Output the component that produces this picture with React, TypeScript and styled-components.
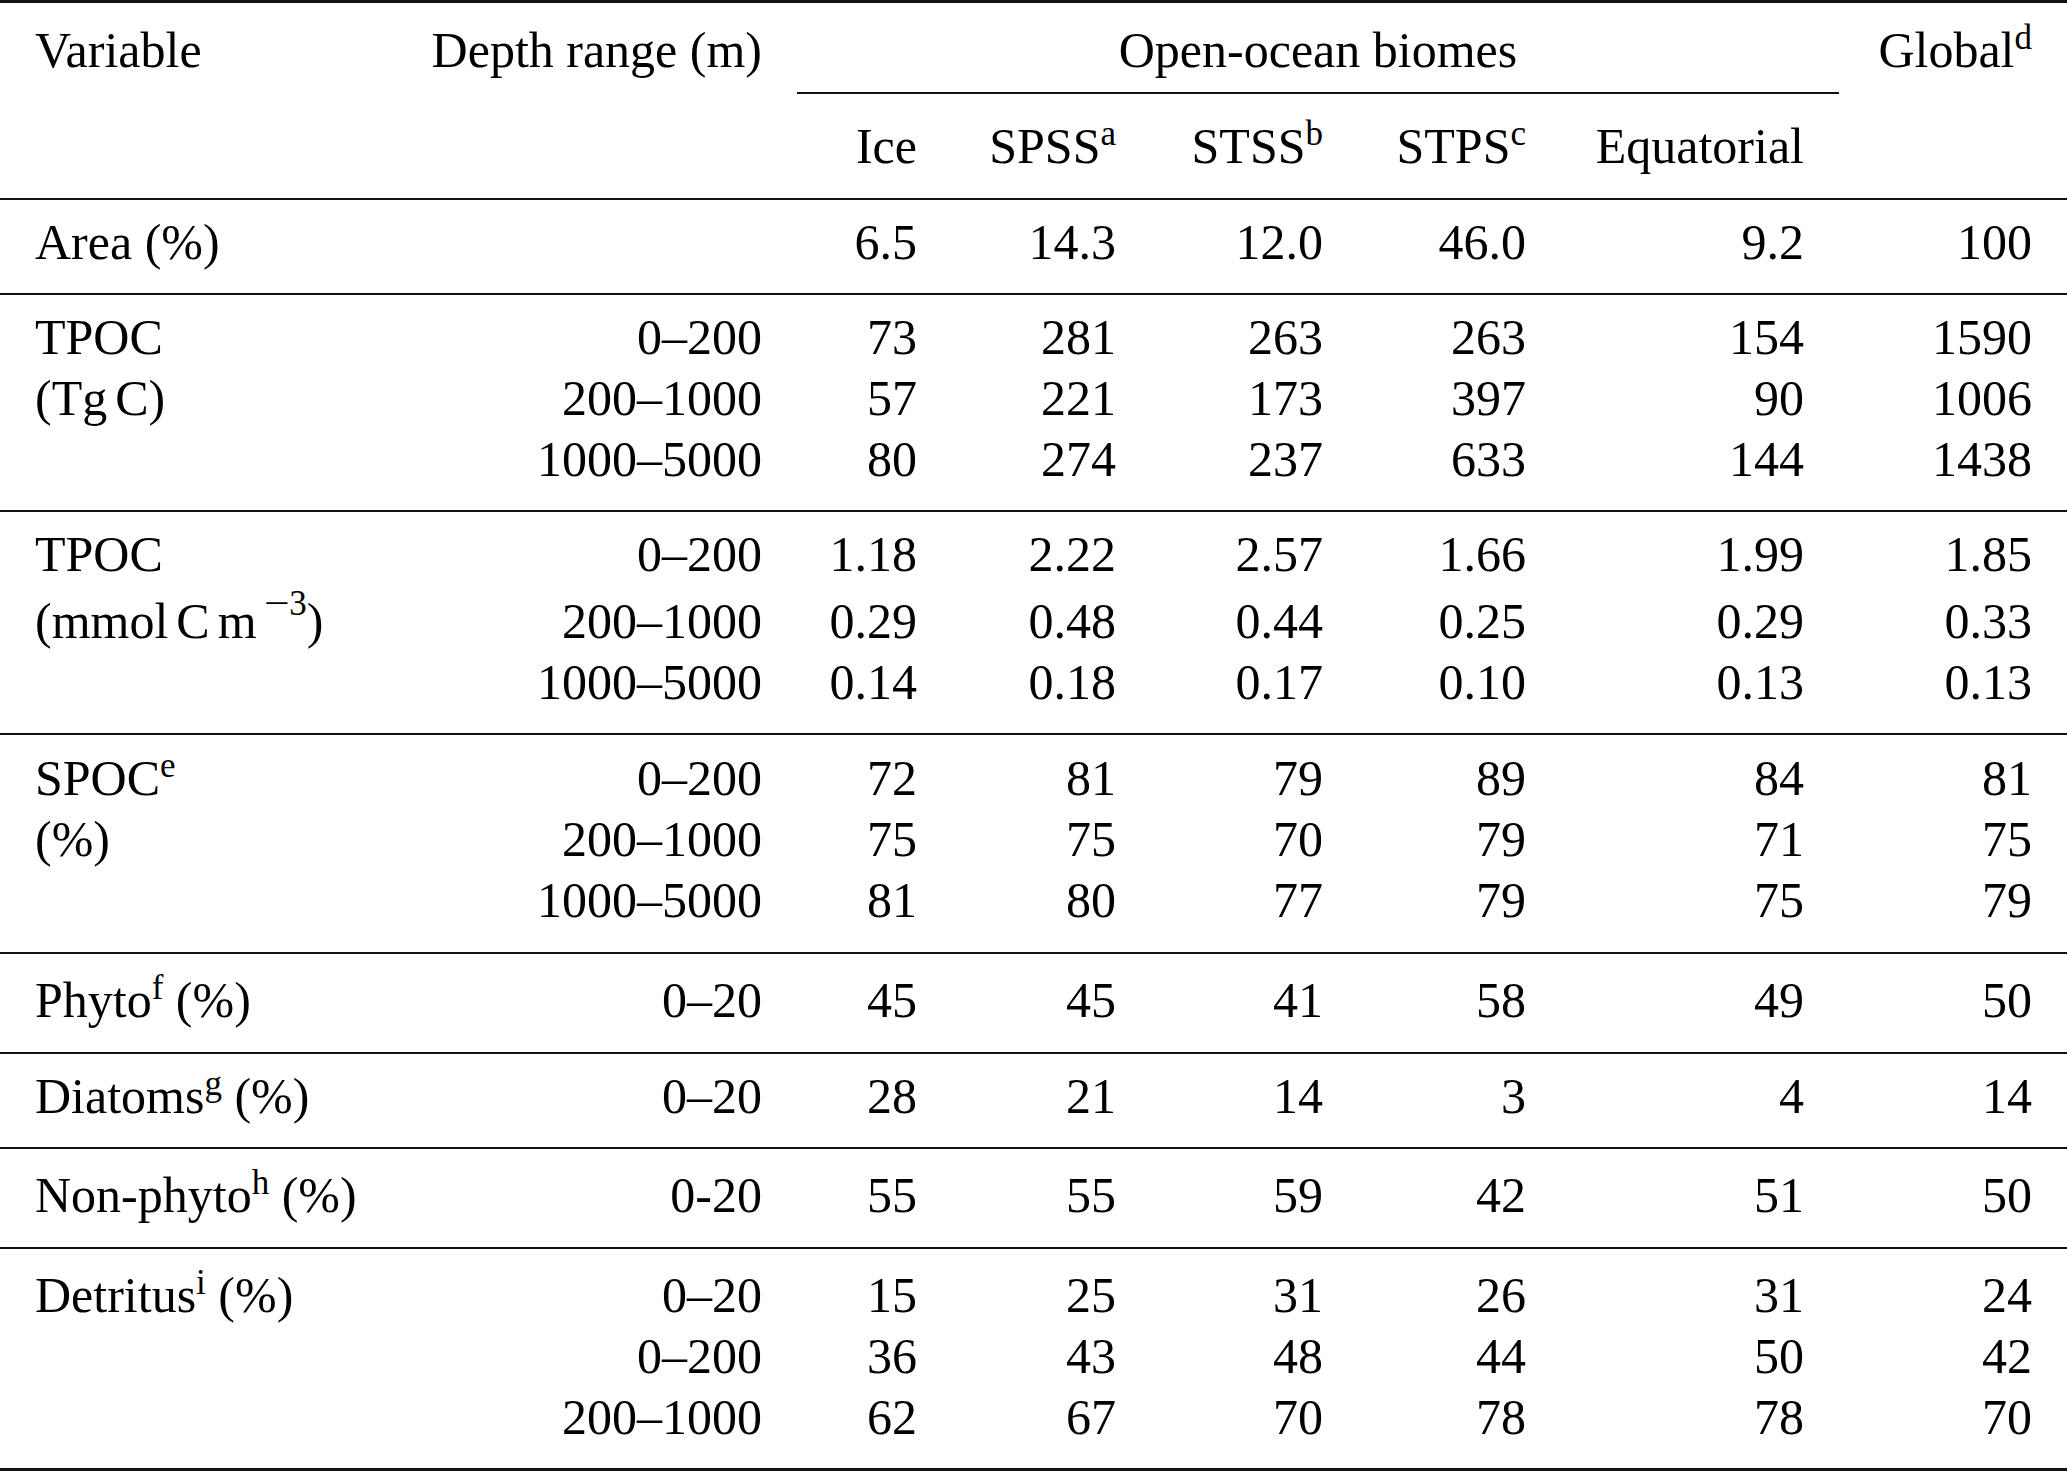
import React from "react";
import styled, { createGlobalStyle } from "styled-components";

const GlobalStyle = createGlobalStyle`
  html, body {
    margin: 0;
    padding: 0;
    background: #fff;
  }
  body {
    font-family: "Liberation Serif", "Times New Roman", serif;
    color: #000;
  }
`;

const COLUMNS = "400px 397px 155px 199px 207px 203px 278px 228px";

const Table = styled.div`
  width: 2067px;
  border-top: 3px solid #111;
  border-bottom: 3px solid #111;
  font-size: 50px;
  line-height: 61px;
`;

const Header = styled.div`
  display: grid;
  grid-template-columns: ${COLUMNS};
  padding-top: 17px;
  padding-bottom: 21px;
  border-bottom: 2px solid #111;
`;

const Section = styled.div<{ $top: number; $bottom: number }>`
  padding-top: ${(p) => p.$top}px;
  padding-bottom: ${(p) => p.$bottom}px;
  border-bottom: 2px solid #111;

  &:last-child {
    border-bottom: none;
  }
`;

const Row = styled.div<{ $lift: number }>`
  display: grid;
  grid-template-columns: ${COLUMNS};
  margin-top: ${(p) => p.$lift}px;
`;

const Cell = styled.div`
  text-align: right;
  padding-right: 35px;
  white-space: nowrap;
`;

const LabelCell = styled.div`
  text-align: left;
  padding-left: 35px;
  white-space: nowrap;
`;

const BiomeCell = styled.div`
  grid-column: 3 / 8;
  text-align: center;
  padding-bottom: 11px;
  border-bottom: 2px solid #111;
  white-space: nowrap;
`;

const SubHead = styled(Cell)`
  padding-top: 22px;
`;

const Spacer = styled.div``;

const Sup = styled.sup<{ $raise?: number }>`
  font-size: 35px;
  line-height: 0;
  vertical-align: ${(p) => p.$raise ?? 18}px;
`;

const Minus = styled.span`
  display: inline-block;
  margin: 0 3px 0 10px;
  transform: scaleX(1.3);
`;

const ThinSpace = styled.span`
  display: inline-block;
  width: 8px;
`;

type RowData = {
  label?: React.ReactNode;
  depth?: string;
  values: string[];
  lift?: number;
};

type SectionData = {
  top: number;
  bottom: number;
  rows: RowData[];
};

const sections: SectionData[] = [
  {
    top: 12,
    bottom: 20,
    rows: [{ label: "Area (%)", values: ["6.5", "14.3", "12.0", "46.0", "9.2", "100"] }],
  },
  {
    top: 12,
    bottom: 20,
    rows: [
      { label: "TPOC", depth: "0–200", values: ["73", "281", "263", "263", "154", "1590"] },
      {
        label: (
          <>
            (Tg<ThinSpace />C)
          </>
        ),
        depth: "200–1000",
        values: ["57", "221", "173", "397", "90", "1006"],
      },
      { depth: "1000–5000", values: ["80", "274", "237", "633", "144", "1438"] },
    ],
  },
  {
    top: 12,
    bottom: 20,
    rows: [
      { label: "TPOC", depth: "0–200", values: ["1.18", "2.22", "2.57", "1.66", "1.99", "1.85"] },
      {
        label: (
          <>
            (mmol<ThinSpace />C<ThinSpace />m<Sup $raise={23}>
              <Minus>−</Minus>3
            </Sup>)
          </>
        ),
        depth: "200–1000",
        values: ["0.29", "0.48", "0.44", "0.25", "0.29", "0.33"],
        lift: 6,
      },
      { depth: "1000–5000", values: ["0.14", "0.18", "0.17", "0.10", "0.13", "0.13"] },
    ],
  },
  {
    top: 13,
    bottom: 21,
    rows: [
      {
        label: (
          <>
            SPOC<Sup>e</Sup>
          </>
        ),
        depth: "0–200",
        values: ["72", "81", "79", "89", "84", "81"],
      },
      { label: "(%)", depth: "200–1000", values: ["75", "75", "70", "79", "71", "75"] },
      { depth: "1000–5000", values: ["81", "80", "77", "79", "75", "79"] },
    ],
  },
  {
    top: 16,
    bottom: 21,
    rows: [
      {
        label: (
          <>
            Phyto<Sup>f</Sup> (%)
          </>
        ),
        depth: "0–20",
        values: ["45", "45", "41", "58", "49", "50"],
      },
    ],
  },
  {
    top: 12,
    bottom: 20,
    rows: [
      {
        label: (
          <>
            Diatoms<Sup>g</Sup> (%)
          </>
        ),
        depth: "0–20",
        values: ["28", "21", "14", "3", "4", "14"],
      },
    ],
  },
  {
    top: 16,
    bottom: 21,
    rows: [
      {
        label: (
          <>
            Non-phyto<Sup>h</Sup> (%)
          </>
        ),
        depth: "0-20",
        values: ["55", "55", "59", "42", "51", "50"],
      },
    ],
  },
  {
    top: 16,
    bottom: 20,
    rows: [
      {
        label: (
          <>
            Detritus<Sup>i</Sup> (%)
          </>
        ),
        depth: "0–20",
        values: ["15", "25", "31", "26", "31", "24"],
      },
      { depth: "0–200", values: ["36", "43", "48", "44", "50", "42"] },
      { depth: "200–1000", values: ["62", "67", "70", "78", "78", "70"] },
    ],
  },
];

export default function App() {
  return (
    <>
      <GlobalStyle />
      <Table>
        <Header>
          <LabelCell>Variable</LabelCell>
          <Cell>Depth range (m)</Cell>
          <BiomeCell>Open-ocean biomes</BiomeCell>
          <Cell>
            Global<Sup>d</Sup>
          </Cell>

          <Spacer />
          <Spacer />
          <SubHead>Ice</SubHead>
          <SubHead>
            SPSS<Sup>a</Sup>
          </SubHead>
          <SubHead>
            STSS<Sup>b</Sup>
          </SubHead>
          <SubHead>
            STPS<Sup>c</Sup>
          </SubHead>
          <SubHead>Equatorial</SubHead>
          <Spacer />
        </Header>

        {sections.map((section, i) => (
          <Section key={i} $top={section.top} $bottom={section.bottom}>
            {section.rows.map((row, j) => (
              <Row key={j} $lift={row.lift ?? 0}>
                <LabelCell>{row.label}</LabelCell>
                <Cell>{row.depth}</Cell>
                {row.values.map((v, k) => (
                  <Cell key={k}>{v}</Cell>
                ))}
              </Row>
            ))}
          </Section>
        ))}
      </Table>
    </>
  );
}
